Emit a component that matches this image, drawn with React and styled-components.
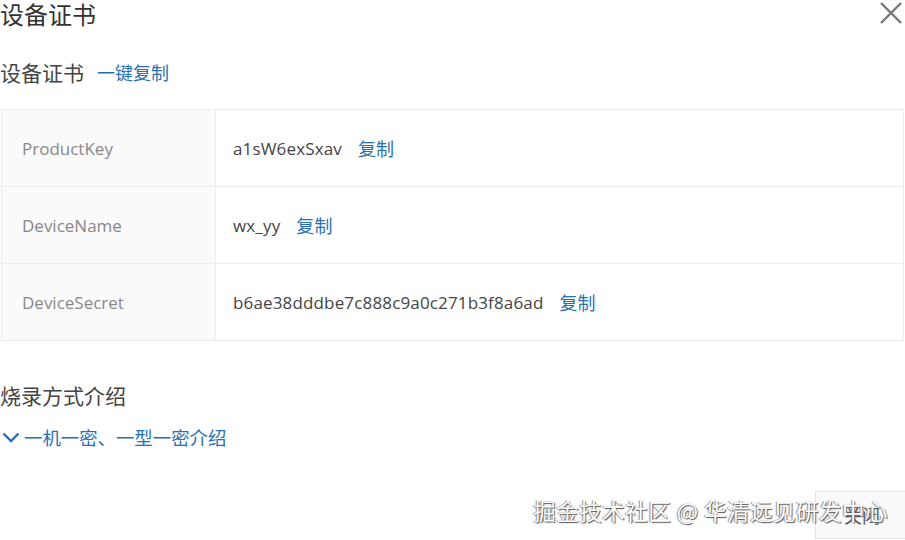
import React from 'react';
import styled, { createGlobalStyle } from 'styled-components';

const GlobalStyle = createGlobalStyle`
  html, body {
    margin: 0;
    padding: 0;
    background: #fff;
    overflow: hidden;
  }
  body {
    font-family: "Open Sans", "Noto Sans CJK SC", sans-serif;
    color: #333;
  }
`;

const Dialog = styled.div`
  position: relative;
  width: 905px;
  height: 540px;
  box-sizing: border-box;
  padding: 0 1px 0 0;
`;

const Header = styled.div`
  display: flex;
  justify-content: space-between;
  align-items: center;
  height: 28px;
`;

const Title = styled.h1`
  margin: 0;
  font-size: 24px;
  font-weight: normal;
  line-height: 30px;
  color: #333;
  font-family: "Noto Sans CJK SC", sans-serif;
`;

const CloseButton = styled.button`
  border: none;
  background: none;
  padding: 0;
  width: 26px;
  height: 26px;
  margin-top: -2px;
  cursor: pointer;
  display: flex;
  align-items: center;
  justify-content: center;
`;

const SectionTitle = styled.div`
  display: flex;
  align-items: center;
  gap: 13px;
  margin-top: ${p => p.$top}px;
  font-size: 21px;
  line-height: 28px;
  color: #444;
  font-family: "Noto Sans CJK SC", sans-serif;
`;

const Link = styled.a`
  color: #2a6fb0;
  font-size: ${p => p.$size || 18}px;
  text-decoration: none;
  font-family: "Noto Sans CJK SC", sans-serif;
  cursor: pointer;
`;

const Table = styled.div`
  margin-top: 23px;
  margin-left: 1px;
  display: grid;
  grid-template-columns: 214px 1fr;
  border: 1px solid #ececec;
`;

const LabelCell = styled.div`
  height: 76px;
  display: flex;
  align-items: center;
  padding-left: 20px;
  background: #fafafa;
  color: #888;
  font-size: 17px;
  border-right: 1px solid #ececec;
  border-top: ${p => (p.$first ? 'none' : '1px solid #ececec')};
`;

const ValueCell = styled.div`
  height: 76px;
  display: flex;
  align-items: center;
  gap: 16px;
  padding-left: 17px;
  color: #444;
  font-size: 17px;
  letter-spacing: 0.15px;
  border-top: ${p => (p.$first ? 'none' : '1px solid #ececec')};
`;

const Expand = styled.div`
  display: flex;
  align-items: center;
  gap: 4px;
  margin-top: 14px;
  height: 28px;
  padding-left: 2px;
`;

const Footer = styled.div`
  display: flex;
  justify-content: flex-end;
  margin-top: 40px;
  margin-right: -12px;
`;

const FooterButton = styled.button`
  width: 101px;
  height: 48px;
  border: 1px solid #e3e3e3;
  background: #fafafa;
  color: #555;
  font-size: 18px;
  font-family: "Noto Sans CJK SC", sans-serif;
  text-align: left;
  padding-left: 28px;
`;

const Watermark = styled.div`
  position: absolute;
  right: 17px;
  bottom: 14px;
  font-size: 22.5px;
  color: #fff;
  font-family: "Noto Sans CJK SC", sans-serif;
  letter-spacing: 0.5px;
  text-shadow: 1px 1px 1px #555, -1px 0 1px #888;
  pointer-events: none;
`;

const rows = [
  { label: 'ProductKey', value: 'a1sW6exSxav' },
  { label: 'DeviceName', value: 'wx_yy' },
  { label: 'DeviceSecret', value: 'b6ae38dddbe7c888c9a0c271b3f8a6ad' },
];

export default function App() {
  return (
    <>
      <GlobalStyle />
      <Dialog>
        <Header>
          <Title>设备证书</Title>
          <CloseButton aria-label="close">
            <svg width="24" height="24" viewBox="0 0 24 24">
              <path d="M2 2 L22 22 M22 2 L2 22" stroke="#777" strokeWidth="2.4" fill="none" />
            </svg>
          </CloseButton>
        </Header>

        <SectionTitle $top={30}>
          设备证书
          <Link $size={18}>一键复制</Link>
        </SectionTitle>

        <Table>
          {rows.map((r, i) => (
            <React.Fragment key={r.label}>
              <LabelCell $first={i === 0}>{r.label}</LabelCell>
              <ValueCell $first={i === 0}>
                {r.value}
                <Link>复制</Link>
              </ValueCell>
            </React.Fragment>
          ))}
        </Table>

        <SectionTitle $top={40}>烧录方式介绍</SectionTitle>
        <Expand>
          <svg width="18" height="14" viewBox="0 0 18 14">
            <path d="M1.5 3.5 L9 11 L16.5 3.5" stroke="#2a6fb0" strokeWidth="2.4" fill="none" />
          </svg>
          <Link $size={18.4}>一机一密、一型一密介绍</Link>
        </Expand>

        <Footer>
          <FooterButton>关闭</FooterButton>
        </Footer>

        <Watermark>掘金技术社区 @ 华清远见研发中心</Watermark>
      </Dialog>
    </>
  );
}
